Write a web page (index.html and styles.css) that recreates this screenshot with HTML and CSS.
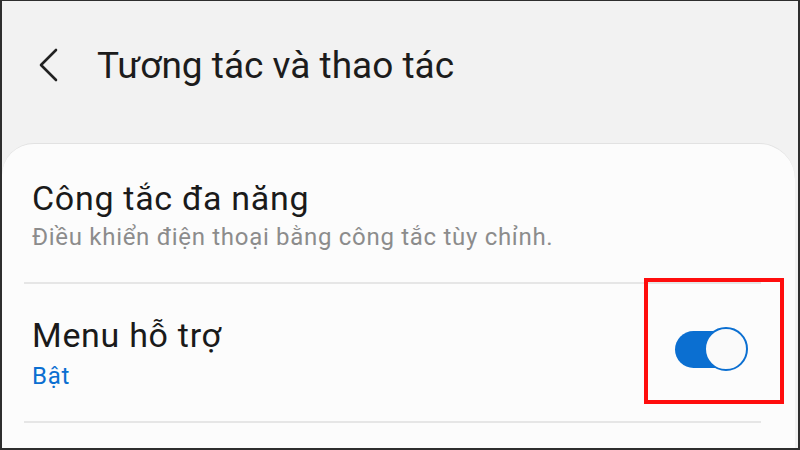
FILE: index.html
```html
<!DOCTYPE html>
<html lang="vi">
<head>
<meta charset="UTF-8" />
<meta name="viewport" content="width=device-width, initial-scale=1" />
<title>Tương tác và thao tác</title>
<link rel="stylesheet" href="styles.css">
</head>
<body>
  <div class="screen">
    <header class="topbar">
      <svg class="back" width="24" height="36" viewBox="0 0 24 36">
        <polyline points="19,3 4,18 19,33" fill="none" stroke="#222" stroke-width="2.6" stroke-linecap="round" stroke-linejoin="round" />
      </svg>
      <h1>Tương tác và thao tác</h1>
    </header>

    <div class="card">
      <div class="row">
        <div class="texts">
          <div class="title">Công tắc đa năng</div>
          <div class="sub">Điều khiển điện thoại bằng công tắc tùy chỉnh.</div>
        </div>
      </div>
      <div class="row">
        <div class="texts">
          <div class="title">Menu hỗ trợ</div>
          <div class="sub on">Bật</div>
        </div>
        <div class="switch"><span class="knob"></span></div>
      </div>
    </div>

    <div class="highlight"></div>
  </div>
</body>
</html>
```

FILE: styles.css
```css
body {
  margin: 0;
  font-family: Roboto, 'Noto Sans', sans-serif;
}
.screen {
  position: relative;
  width: 796px;
  height: 447px;
  border-style: solid;
  border-color: #2e2e2e;
  border-width: 1px 2px 2px 2px;
  background: #f2f2f2;
  display: flex;
  flex-direction: column;
  overflow: hidden;
}
.topbar {
  height: 99px;
  padding: 43px 0 0 35px;
  display: flex;
  align-items: flex-start;
  flex-shrink: 0;
}
.back {
  margin-top: 3px;
}
.topbar h1 {
  margin: 0 0 0 36px;
  font-size: 37px;
  line-height: 44px;
  font-weight: 400;
  color: #1c1c1c;
}
.card {
  flex: 1;
  margin-right: 3px;
  background: #fcfcfc;
  border-top: 1px solid #e2e2e2;
  border-radius: 32px 36px 0 0;
  padding-top: 34px;
}
.row {
  margin: 0 34px 0 22px;
  padding: 0 14px 31px 8px;
  border-bottom: 2px solid #e6e6e6;
  display: flex;
  align-items: center;
}
.row + .row {
  padding-top: 31px;
}
.texts {
  flex: 1;
}
.title {
  font-size: 34px;
  line-height: 40px;
  letter-spacing: 0.7px;
  color: #1a1a1a;
}
.sub {
  margin-top: 5px;
  font-size: 24px;
  line-height: 28px;
  letter-spacing: 0.7px;
  color: #8c8c8c;
}
.sub.on {
  margin-top: 7px;
  color: #0b6fd1;
}
.switch {
  position: relative;
  width: 72px;
  height: 37px;
  margin-top: -6px;
  border-radius: 19px;
  background: #0b6fd1;
}
.knob {
  position: absolute;
  right: -1px;
  top: -4px;
  width: 40px;
  height: 40px;
  border: 2px solid #0b6fd1;
  border-radius: 50%;
  background: #fafafa;
}
.highlight {
  position: absolute;
  left: 642px;
  top: 277px;
  width: 132px;
  height: 118px;
  border: 4px solid #ff0d0d;
}
```
